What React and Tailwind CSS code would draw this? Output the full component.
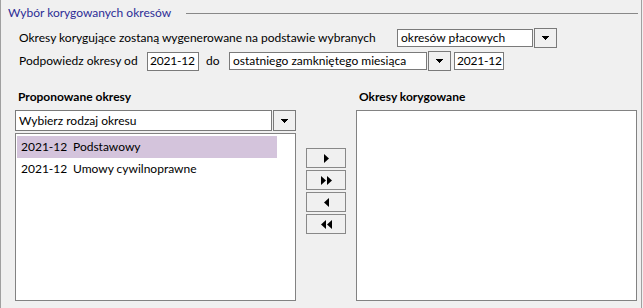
import React from 'react';

function DownArrow() {
  return (
    <svg width="7" height="4" viewBox="0 0 7 4" shapeRendering="crispEdges">
      <path d="M0 0h7l-3.5 4z" fill="#000" />
    </svg>
  );
}

function Tri({ dir = 'right', double = false }) {
  const one = dir === 'right' ? 'M0 0L5 4.5L0 9Z' : 'M5 0L0 4.5L5 9Z';
  const two = dir === 'right' ? 'M6 0L11 4.5L6 9Z' : 'M11 0L6 4.5L11 9Z';
  return (
    <svg width={double ? 11 : 5} height="9" viewBox={`0 0 ${double ? 11 : 5} 9`}>
      <path d={one} fill="#000" />
      {double && <path d={two} fill="#000" />}
    </svg>
  );
}

function Combo({ text, w, h = 'h-[18px]', btnH = 'h-[20px]' }) {
  return (
    <div className="flex items-center">
      <div className={`${w} ${h} bg-white border border-[#7a7a7a] flex items-center pl-[3px] leading-none whitespace-nowrap overflow-hidden`}>
        {text}
      </div>
      <div className={`ml-[1px] w-[23px] ${btnH} border border-[#7a7a7a] bg-[#f0f0f0] flex items-center justify-center`}>
        <DownArrow />
      </div>
    </div>
  );
}

function MoveButton({ dir, double }) {
  return (
    <div className="w-[40px] h-[20px] border border-[#888] bg-[#f0f0f0] flex items-center justify-center">
      <Tri dir={dir} double={double} />
    </div>
  );
}

export default function App() {
  return (
    <div className="w-[643px] h-[308px] bg-[#f0f0f0] overflow-hidden">
      <div className="w-[642px] h-full border-x border-[#a0a0a0] text-[12px] text-black whitespace-nowrap font-['Segoe_UI','Lato',sans-serif]">
        {/* Group header */}
        <div className="h-[26px] flex items-center pl-[7px] pr-[3px]">
          <span className="text-[#2d2d96]">Wybór korygowanych okresów</span>
          <div className="flex-1 h-px bg-[#888] ml-[15px]" />
        </div>

        {/* Row 1 */}
        <div className="mt-[2px] h-[20px] flex items-center pl-[18px]">
          <span className="w-[378px] shrink-0">Okresy korygujące zostaną wygenerowane na podstawie wybranych</span>
          <Combo text="okresów płacowych" w="w-[136px]" />
        </div>

        {/* Row 2 */}
        <div className="mt-[3px] h-[20px] flex items-center pl-[18px]">
          <span className="w-[128px] shrink-0">Podpowiedz okresy od</span>
          <div className="w-[52px] h-[19px] bg-white border border-[#7a7a7a] flex items-center pl-[2px] tracking-[-0.2px]">2021-12</div>
          <span className="w-[30px] pl-[7px] shrink-0">do</span>
          <Combo text="ostatniego zamkniętego miesiąca" w="w-[198px]" />
          <div className="ml-[3px] w-[50px] h-[18px] bg-white border border-[#7a7a7a] flex items-center pl-[2px] tracking-[-0.2px]">2021-12</div>
        </div>

        {/* Lists */}
        <div className="mt-[13px] flex pl-[14px]">
          <div className="w-[281px] flex flex-col">
            <div className="h-[26px] flex items-center pl-[3px] font-bold">Proponowane okresy</div>
            <Combo text="Wybierz rodzaj okresu" w="w-[257px]" h="h-[21px]" btnH="h-[21px]" />
            <div className="mt-[2px] h-[168px] bg-white border border-[#828282] px-[1px] pt-[2px]">
              <div className="w-[260px] h-[22px] bg-[#d4c4dc] flex items-center pl-[4px]">
                <span className="w-[52px]">2021-12</span>
                <span>Podstawowy</span>
              </div>
              <div className="w-[260px] h-[22px] flex items-center pl-[4px]">
                <span className="w-[52px]">2021-12</span>
                <span>Umowy cywilnoprawne</span>
              </div>
            </div>
          </div>

          <div className="ml-[10px] pt-[64px] flex flex-col gap-[2px]">
            <MoveButton dir="right" />
            <MoveButton dir="right" double />
            <MoveButton dir="left" />
            <MoveButton dir="left" double />
          </div>

          <div className="ml-[10px] w-[281px] flex flex-col">
            <div className="h-[26px] flex items-center pl-[3px] font-bold">Okresy korygowane</div>
            <div className="h-[191px] bg-white border border-[#828282]" />
          </div>
        </div>
      </div>
    </div>
  );
}
